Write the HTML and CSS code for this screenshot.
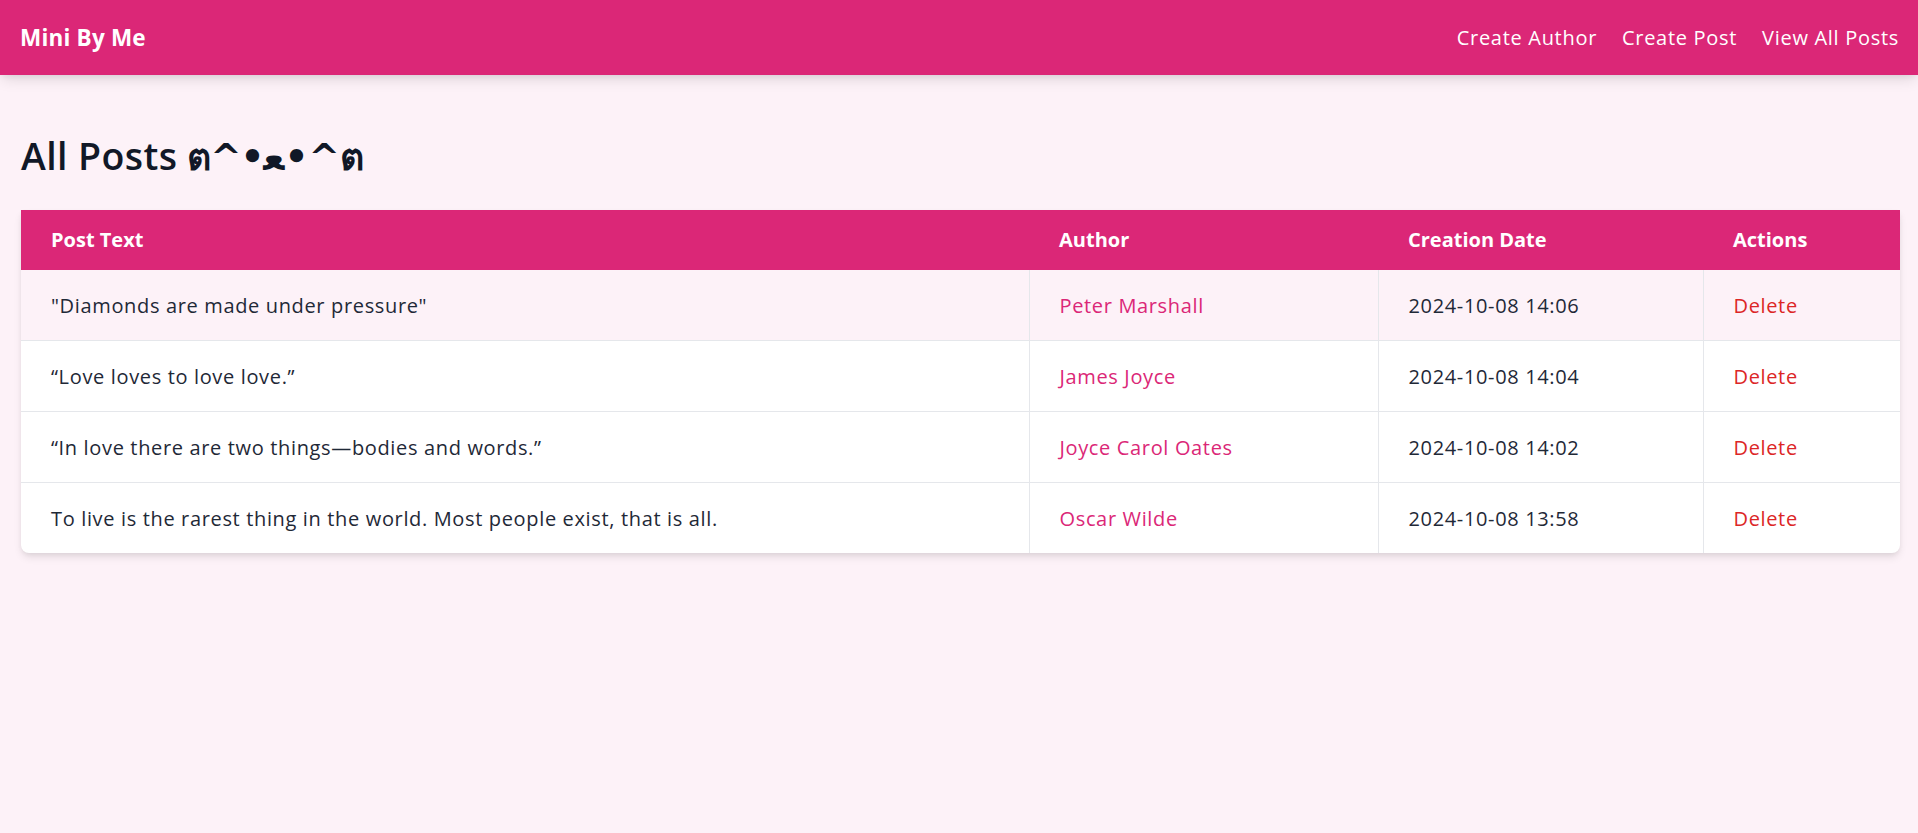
FILE: index.html
```html
<!DOCTYPE html>
<html lang="en">
<head>
<meta charset="utf-8">
<title>Mini By Me</title>
<link rel="stylesheet" href="styles.css">
</head>
<body>
<nav class="navbar">
  <a class="brand" href="#">Mini By Me</a>
  <div class="nav-links">
    <a href="#">Create Author</a>
    <a href="#">Create Post</a>
    <a href="#">View All Posts</a>
  </div>
</nav>
<main class="page">
  <h1 class="page-title">All Posts <span class="kaomoji">ต^•ﻌ•^ต</span></h1>
  <div class="card">
    <table class="posts">
      <colgroup>
        <col class="col-text">
        <col class="col-author">
        <col class="col-date">
        <col class="col-actions">
      </colgroup>
      <thead>
        <tr><th>Post Text</th><th>Author</th><th>Creation Date</th><th>Actions</th></tr>
      </thead>
      <tbody>
        <tr class="row-active">
          <td>"Diamonds are made under pressure"</td>
          <td><a class="author" href="#">Peter Marshall</a></td>
          <td>2024-10-08 14:06</td>
          <td><a class="delete" href="#">Delete</a></td>
        </tr>
        <tr>
          <td>“Love loves to love love.”</td>
          <td><a class="author" href="#">James Joyce</a></td>
          <td>2024-10-08 14:04</td>
          <td><a class="delete" href="#">Delete</a></td>
        </tr>
        <tr>
          <td>“In love there are two things—bodies and words.”</td>
          <td><a class="author" href="#">Joyce Carol Oates</a></td>
          <td>2024-10-08 14:02</td>
          <td><a class="delete" href="#">Delete</a></td>
        </tr>
        <tr>
          <td>To live is the rarest thing in the world. Most people exist, that is all.</td>
          <td><a class="author" href="#">Oscar Wilde</a></td>
          <td>2024-10-08 13:58</td>
          <td><a class="delete" href="#">Delete</a></td>
        </tr>
      </tbody>
    </table>
  </div>
</main>
</body>
</html>
```
FILE: styles.css
```css
* { box-sizing: border-box; }

html, body {
  margin: 0;
  padding: 0;
}

body {
  background: #fdf2f8;
  font-family: "Open Sans", "DejaVu Sans", "Noto Sans", sans-serif;
  color: #1f2937;
  min-height: 833px;
}

a { text-decoration: none; }

.navbar {
  height: 75px;
  background: #db2777;
  display: flex;
  align-items: center;
  justify-content: space-between;
  padding: 0 19px 0 20px;
  box-shadow: 0 6px 14px -2px rgba(0, 0, 0, 0.12), 0 3px 6px -2px rgba(0, 0, 0, 0.06);
  position: relative;
  z-index: 1;
}

.brand {
  color: #ffffff;
  font-weight: 700;
  font-size: 22.5px;
  line-height: 30px;
  letter-spacing: 0.2px;
}

.nav-links {
  display: flex;
  gap: 25px;
}

.nav-links a {
  color: #ffffff;
  font-size: 20px;
  line-height: 30px;
  letter-spacing: 0.7px;
}

.page {
  padding: 58px 18px 0 21px;
}

.page-title {
  margin: 0 0 32px;
  height: 45px;
  font-size: 37.5px;
  line-height: 45px;
  font-weight: 600;
  color: #111827;
  letter-spacing: 0.4px;
}

.kaomoji {
  font-family: "DejaVu Sans", "Open Sans", sans-serif;
  font-weight: 700;
  line-height: 1;
  letter-spacing: -1.2px;
}

.card {
  background: #ffffff;
  border-radius: 0 0 8px 8px;
  overflow: hidden;
  box-shadow: 0 5px 8px -1px rgba(0, 0, 0, 0.1), 0 2px 5px -1px rgba(0, 0, 0, 0.06);
}

.posts {
  width: 100%;
  border-collapse: collapse;
  table-layout: fixed;
}

.col-text { width: 1008px; }
.col-author { width: 349px; }
.col-date { width: 325px; }
.col-actions { width: 197px; }

.posts th {
  background: #db2777;
  color: #ffffff;
  text-align: left;
  font-size: 20px;
  line-height: 30px;
  font-weight: 700;
  padding: 15px 30px;
}

.posts td {
  padding: 21px 30px 19px;
  font-size: 20px;
  line-height: 30px;
  letter-spacing: 0.65px;
  color: #1f2937;
  white-space: nowrap;
}

.posts td + td {
  border-left: 1px solid #e5e7eb;
}

.posts tbody tr + tr td {
  border-top: 1px solid #e5e7eb;
}

.posts tbody tr.row-active td {
  background: #fdf2f8;
}

.author { color: #db2777; }

.delete { color: #dc2626; }
```
